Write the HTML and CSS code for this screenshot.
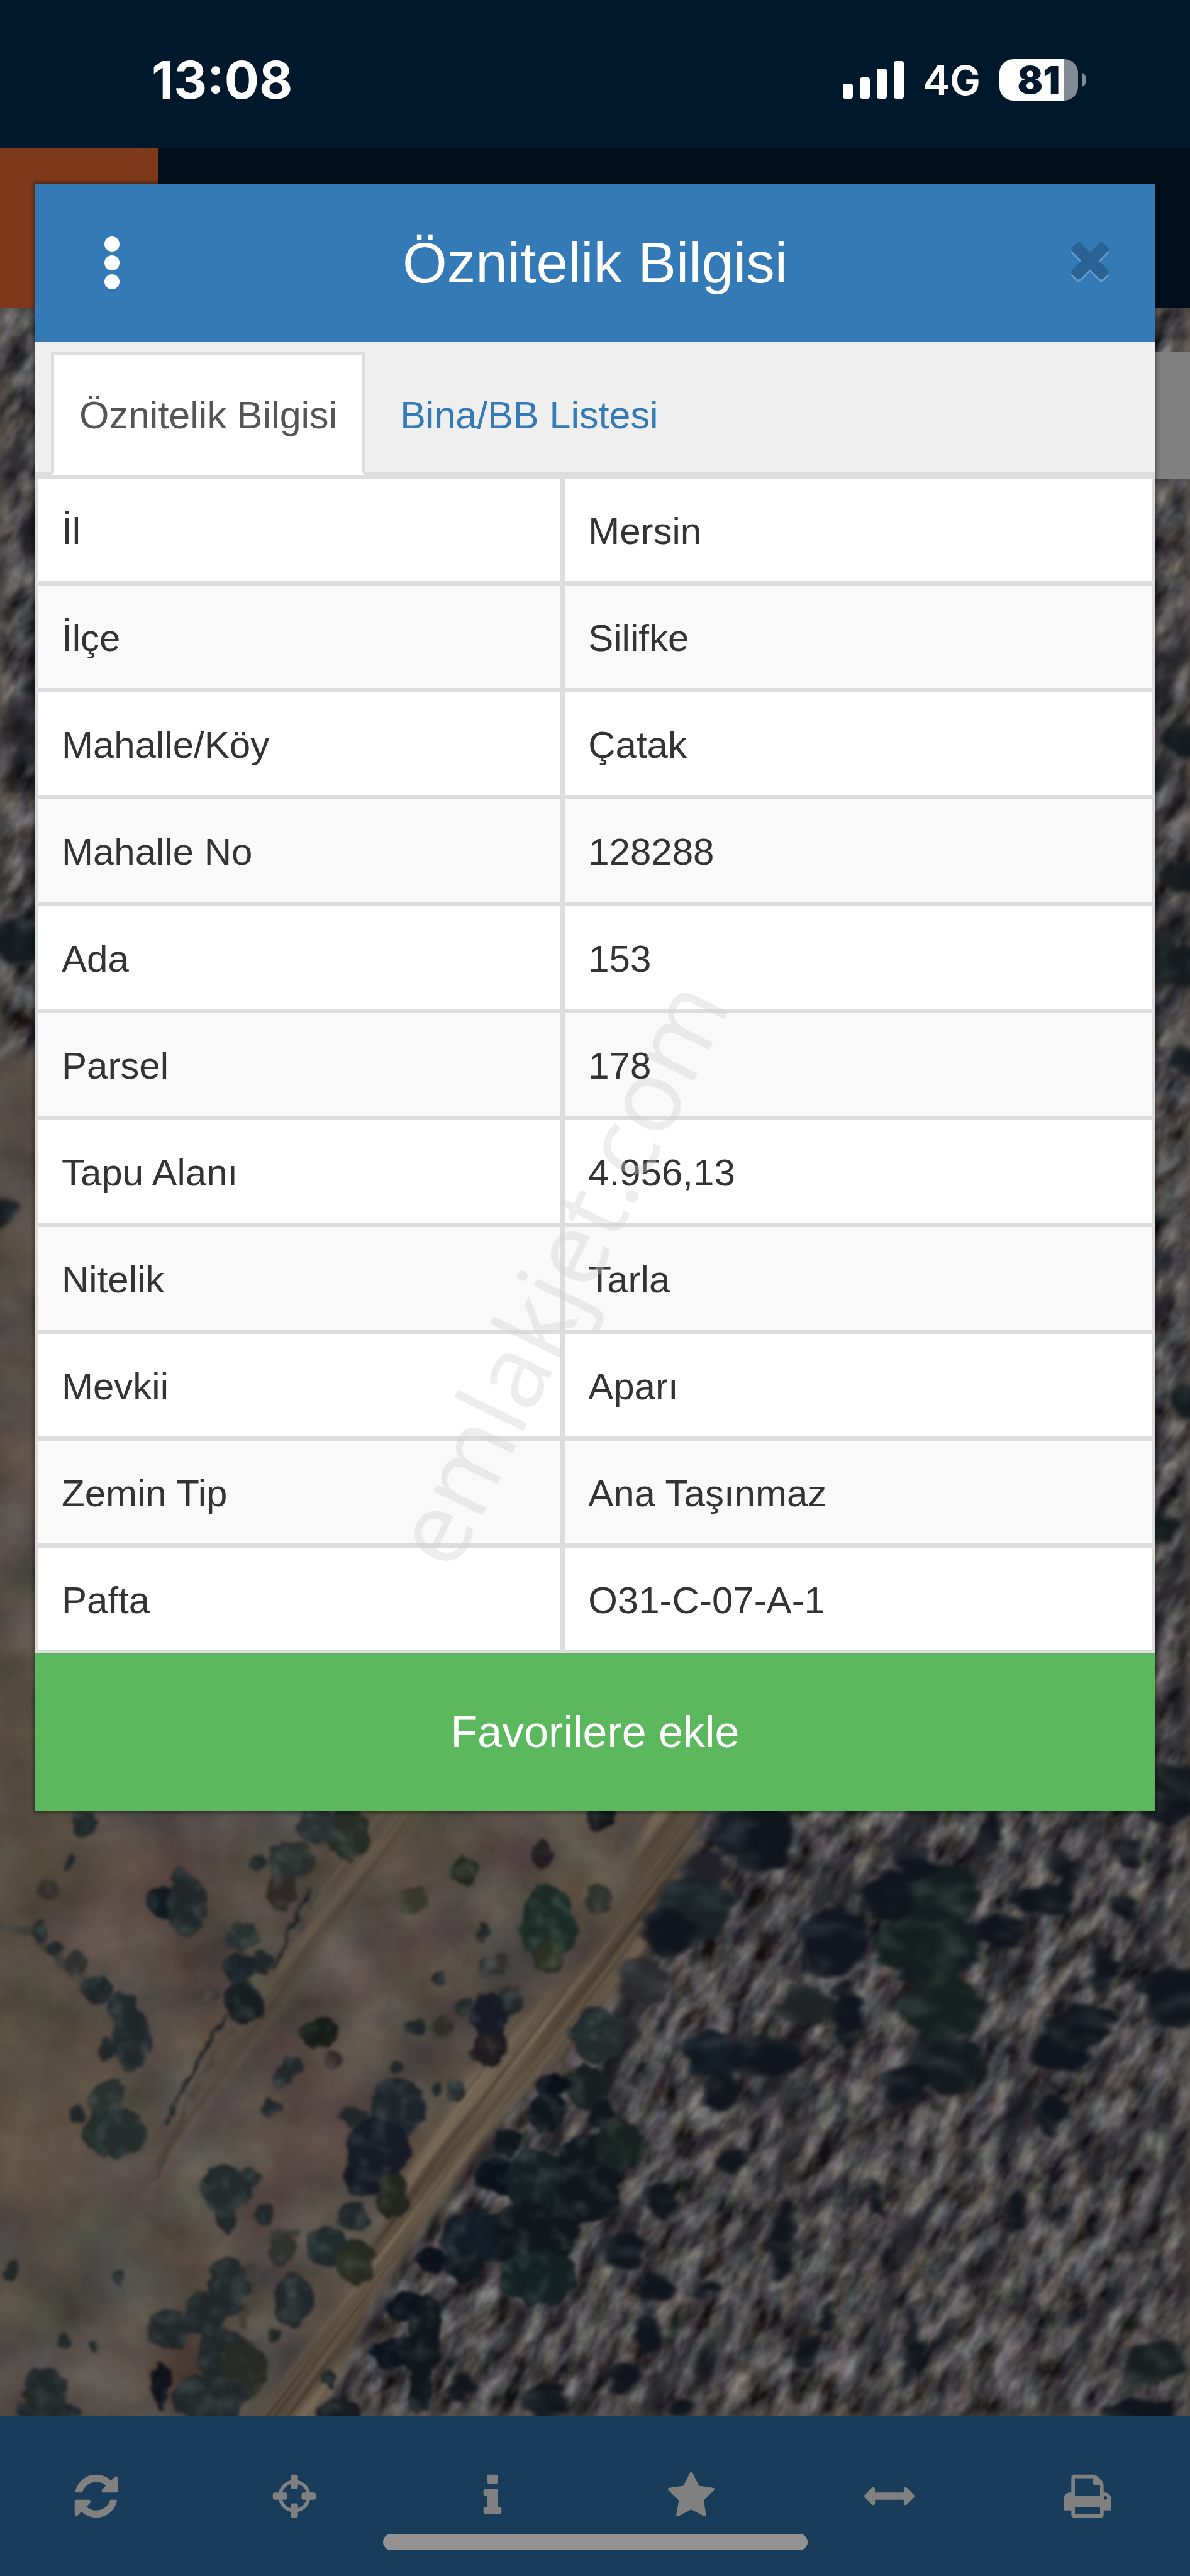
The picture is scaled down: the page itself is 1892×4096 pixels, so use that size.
FILE: index.html
```
<!DOCTYPE html>
<html lang="tr">
<head>
  <meta charset="UTF-8">
  <meta name="viewport" content="width=device-width, initial-scale=1.0">
  <title>Öznitelik Bilgisi</title>
  <link rel="stylesheet" href="styles.css">
</head>
<body>
<header class="status-bar">
  <span class="clock">13:08</span>
  <div class="status-right">
    <div class="signal"><i class="bar b1"></i><i class="bar b2"></i><i class="bar b3"></i><i class="bar b4"></i></div>
    <span class="network">4G</span>
    <div class="battery"><span class="battery-level">81</span></div>
  </div>
</header>
<div class="top-bar"><div class="logo-box"></div></div>

<main class="map">
  <svg class="map-image" viewBox="0 0 1892 3353" preserveAspectRatio="xMidYMax slice" aria-hidden="true">
    <defs>
      <filter id="soil" x="0" y="0" width="100%" height="100%" color-interpolation-filters="sRGB">
        <feTurbulence type="fractalNoise" baseFrequency=".008 .009" numOctaves="6" seed="4"/>
        <feColorMatrix values=".22 .08 0 0 .18  .22 0 0 0 .19  .17 0 .08 0 .15  0 0 0 0 1"/>
      </filter>
      <filter id="rock" x="0" y="0" width="100%" height="100%" color-interpolation-filters="sRGB">
        <feTurbulence type="fractalNoise" baseFrequency=".018 .036" numOctaves="4" seed="11"/>
        <feColorMatrix values=".85 .1 0 0 -.2  .85 0 0 0 -.155  .8 0 .12 0 -.18  0 0 0 0 1"/>
        <feGaussianBlur stdDeviation="1.5"/>
      </filter>
      <filter id="cracks" x="0" y="0" width="100%" height="100%" color-interpolation-filters="sRGB">
        <feTurbulence type="fractalNoise" baseFrequency=".006 .016" numOctaves="5" seed="23"/>
        <feColorMatrix values="0 0 0 0 .05  0 0 0 0 .06  0 0 0 0 .1  5 0 0 0 -2.85"/>
        <feGaussianBlur stdDeviation="2"/>
      </filter>
      <filter id="dirt" x="0" y="0" width="100%" height="100%" color-interpolation-filters="sRGB">
        <feTurbulence type="fractalNoise" baseFrequency=".002 .05" numOctaves="4" seed="7"/>
        <feColorMatrix values=".35 0 0 0 .2  .32 0 0 0 .165  .26 0 0 0 .135  0 0 0 0 1"/>
      </filter>
      <filter id="foliage" x="-5%" y="-5%" width="110%" height="110%" color-interpolation-filters="sRGB">
        <feTurbulence type="fractalNoise" baseFrequency=".022" numOctaves="3" seed="3" result="n"/>
        <feDisplacementMap in="SourceGraphic" in2="n" scale="36" xChannelSelector="R" yChannelSelector="G" result="d"/>
        <feColorMatrix in="n" values=".35 0 0 0 -.17  .35 0 0 0 -.165  .35 0 0 0 -.17  0 0 0 0 1" result="t"/>
        <feComposite in="t" in2="d" operator="in" result="td"/>
        <feComposite in="d" in2="td" operator="arithmetic" k2="1" k3=".9"/>
        <feGaussianBlur stdDeviation="4.5"/>
      </filter>
      <filter id="soft"><feGaussianBlur stdDeviation="40"/></filter>
      <filter id="edge"><feGaussianBlur stdDeviation="12"/></filter>
      <mask id="rockArea">
        <path filter="url(#edge)" fill="#fff" d="M0 0H1892V3353H505L600 3170 675 3050 780 2905 875 2800 985 2685 1060 2575 1125 2385 1180 1900 900 1100 60 1180 0 1200z"/>
      </mask>
      <mask id="roadArea">
        <g filter="url(#edge)" transform="translate(0 2390) scale(.62)">
          <path fill="#fff" d="M630 1600L880 1250 1000 1010 1180 720 1320 540 1540 350 1620 200 1660-20H1800L1700 290 1568 470 1400 660 1250 830 1080 1060 960 1240 790 1600z"/>
          <path fill="#999" d="M930-20H1110L830 340 700 520 480 820 400 960 380 950 440 820 620 560 790 270z"/>
        </g>
      </mask>
    </defs>

    <rect class="soil-base" width="1892" height="3353"/>
    <rect width="1892" height="3353" filter="url(#soil)"/>
    <g filter="url(#soft)" opacity=".3">
      <ellipse cx="30" cy="2350" rx="60" ry="260" fill="#5d5130"/>
      <ellipse cx="40" cy="2850" rx="140" ry="190" fill="#6d5a3c"/>
      <ellipse cx="220" cy="2520" rx="120" ry="100" fill="#5c3c3c"/>
      <ellipse cx="500" cy="2880" rx="80" ry="120" fill="#6b4a46"/>
      <ellipse cx="640" cy="2450" rx="120" ry="50" fill="#6b5535"/>
      <ellipse cx="110" cy="3150" rx="120" ry="80" fill="#40443e"/>
    </g>
    <g mask="url(#rockArea)">
      <rect x="-2200" y="-800" width="6200" height="5000" transform="rotate(-58 946 1676)" filter="url(#rock)"/>
      <rect x="-2200" y="-800" width="6200" height="5000" transform="rotate(-62 946 1676)" filter="url(#cracks)" opacity=".75"/>
      <rect width="1892" height="3353" fill="#4c4845" opacity=".22"/>
    </g>
    <g mask="url(#roadArea)">
      <rect x="-500" y="400" width="3800" height="2700" transform="rotate(-53 946 2800)" filter="url(#dirt)"/>
    </g>

    <!-- stone walls between the fields -->
    <g transform="translate(0 2390) scale(.62)" fill="none" stroke-linecap="round" filter="url(#foliage)">
      <path d="M800 190L740 320 700 410M575 530L500 660 430 800" stroke="#1f2024" stroke-width="9"/>
      <path d="M815 200L750 330M590 560L520 680 450 820 390 960" stroke="#77706a" stroke-width="12" opacity=".6"/>
      <path d="M0 290L90 320 160 390 270 470M640 1170L620 1320M700 1080H760" stroke="#746f6a" stroke-width="22" opacity=".45"/>
    </g>

    <!-- field trees -->
    <g transform="translate(0 2390) scale(.62)" fill="#22282a" filter="url(#foliage)">
      <ellipse cx="215" cy="30" rx="30" ry="28"/><ellipse cx="178" cy="135" rx="15" ry="18"/><ellipse cx="125" cy="205" rx="28" ry="25" fill="#352f2e"/>
      <ellipse cx="420" cy="235" rx="42" ry="40" fill="#11191f"/><ellipse cx="480" cy="240" rx="50" ry="80"/><ellipse cx="462" cy="170" rx="22" ry="25"/>
      <ellipse cx="890" cy="60" rx="55" ry="72" fill="#262b26"/><ellipse cx="750" cy="125" rx="60" ry="50" fill="#2a2f2e"/><ellipse cx="662" cy="135" rx="22" ry="22"/><ellipse cx="722" cy="210" rx="38" ry="42" fill="#2e2927"/><ellipse cx="810" cy="40" rx="50" ry="42" fill="#2b3033"/>
      <ellipse cx="1195" cy="155" rx="34" ry="35" fill="#222620"/><ellipse cx="1390" cy="115" rx="26" ry="32" fill="#211c20"/><ellipse cx="1062" cy="230" rx="36" ry="36" fill="#38382f"/><ellipse cx="1545" cy="15" rx="36" ry="32" fill="#111317"/>
      <ellipse cx="1405" cy="290" rx="72" ry="95" fill="#1c2b26"/><ellipse cx="1405" cy="380" rx="44" ry="40" fill="#2b2f24"/><ellipse cx="1535" cy="225" rx="34" ry="38" fill="#30342f"/>
      <ellipse cx="625" cy="325" rx="45" ry="35" fill="#283030"/><ellipse cx="615" cy="405" rx="40" ry="40" fill="#1d2429"/><ellipse cx="625" cy="490" rx="50" ry="55" fill="#181e20"/><ellipse cx="670" cy="390" rx="25" ry="28"/>
      <ellipse cx="105" cy="310" rx="20" ry="25"/><ellipse cx="137" cy="350" rx="18" ry="20"/><ellipse cx="195" cy="390" rx="30" ry="26" fill="#30312f"/><ellipse cx="250" cy="460" rx="38" ry="34"/><ellipse cx="310" cy="505" rx="34" ry="40"/><ellipse cx="340" cy="590" rx="50" ry="72"/><ellipse cx="272" cy="612" rx="22" ry="30"/>
      <ellipse cx="275" cy="745" rx="46" ry="50" fill="#2a3130"/><ellipse cx="295" cy="825" rx="85" ry="62" fill="#242d2c"/><ellipse cx="195" cy="780" rx="16" ry="22"/>
      <ellipse cx="538" cy="472" rx="24" ry="16" fill="#34302c"/><ellipse cx="820" cy="572" rx="46" ry="42" fill="#161b17"/><ellipse cx="750" cy="655" rx="28" ry="25"/><ellipse cx="725" cy="682" rx="22" ry="24"/><ellipse cx="695" cy="762" rx="30" ry="28"/><ellipse cx="855" cy="642" rx="18" ry="18" fill="#332c2b"/><ellipse cx="1012" cy="658" rx="14" ry="14"/>
      <ellipse cx="1240" cy="315" rx="18" ry="20"/><ellipse cx="1262" cy="395" rx="34" ry="28" fill="#323331"/><ellipse cx="1125" cy="432" rx="22" ry="20"/><ellipse cx="1190" cy="505" rx="22" ry="28"/><ellipse cx="1065" cy="552" rx="22" ry="22"/><ellipse cx="1135" cy="558" rx="26" ry="22" fill="#2e2d27"/>
      <ellipse cx="1305" cy="490" rx="32" ry="36"/><ellipse cx="1255" cy="530" rx="42" ry="66" fill="#171a24"/><ellipse cx="1255" cy="612" rx="46" ry="40" fill="#1f1b1f"/><ellipse cx="1175" cy="720" rx="22" ry="22"/><ellipse cx="1115" cy="712" rx="12" ry="14"/>
      <ellipse cx="1020" cy="770" rx="72" ry="82" fill="#1f252b"/><ellipse cx="905" cy="785" rx="34" ry="28"/><ellipse cx="970" cy="865" rx="84" ry="74" fill="#161b25"/><ellipse cx="945" cy="935" rx="72" ry="48" fill="#151923"/><ellipse cx="1005" cy="990" rx="44" ry="58" fill="#24271f"/>
      <ellipse cx="1530" cy="575" rx="68" ry="72" fill="#222a2b"/>
      <ellipse cx="580" cy="970" rx="62" ry="60" fill="#222a2b"/><ellipse cx="580" cy="1045" rx="28" ry="42"/><ellipse cx="675" cy="1032" rx="24" ry="26"/><ellipse cx="645" cy="945" rx="25" ry="30"/>
      <ellipse cx="910" cy="1042" rx="40" ry="36"/><ellipse cx="838" cy="1118" rx="50" ry="54" fill="#20292b"/><ellipse cx="912" cy="1155" rx="50" ry="60" fill="#272a21"/><ellipse cx="720" cy="1125" rx="34" ry="44" fill="#303230"/><ellipse cx="750" cy="1255" rx="52" ry="68"/>
      <ellipse cx="585" cy="1225" rx="54" ry="78"/><ellipse cx="435" cy="1332" rx="55" ry="50"/><ellipse cx="525" cy="1295" rx="50" ry="62"/><ellipse cx="565" cy="1400" rx="60" ry="80"/><ellipse cx="625" cy="1435" rx="62" ry="76" fill="#272a24"/><ellipse cx="535" cy="1510" rx="94" ry="64"/><ellipse cx="412" cy="1475" rx="26" ry="64" fill="#0f1219"/>
      <ellipse cx="115" cy="1490" rx="58" ry="58"/><ellipse cx="125" cy="1545" rx="82" ry="30"/><ellipse cx="28" cy="1182" rx="20" ry="20"/><ellipse cx="308" cy="1198" rx="14" ry="20"/><ellipse cx="243" cy="1372" rx="16" ry="16"/><ellipse cx="165" cy="1358" rx="18" ry="16"/>
      <ellipse cx="843" cy="1460" rx="20" ry="22"/><ellipse cx="865" cy="1545" rx="60" ry="30" fill="#171b20"/><ellipse cx="700" cy="1350" rx="12" ry="12"/>
    </g>

    <!-- dark row along the road -->
    <g transform="translate(0 2390) scale(.62)" fill="#10171c" filter="url(#foliage)">
      <ellipse cx="1420" cy="705" rx="42" ry="26" fill="#0a0f18"/><ellipse cx="1510" cy="710" rx="54" ry="56" fill="#18201f"/><ellipse cx="1400" cy="775" rx="44" ry="50"/><ellipse cx="1540" cy="780" rx="34" ry="32"/>
      <ellipse cx="1300" cy="850" rx="36" ry="34"/><ellipse cx="1290" cy="940" rx="70" ry="50" fill="#0c111b"/><ellipse cx="1380" cy="950" rx="90" ry="80" fill="#152022"/><ellipse cx="1520" cy="900" rx="90" ry="70"/><ellipse cx="1590" cy="860" rx="70" ry="60" fill="#182220"/><ellipse cx="1500" cy="1000" rx="90" ry="60"/>
      <ellipse cx="1230" cy="1090" rx="100" ry="66" fill="#131c26"/><ellipse cx="1370" cy="1090" rx="110" ry="90"/><ellipse cx="1380" cy="1200" rx="96" ry="72" fill="#142022"/><ellipse cx="1105" cy="1150" rx="40" ry="34" fill="#0c111b"/><ellipse cx="1190" cy="1170" rx="50" ry="40"/>
      <ellipse cx="1040" cy="1275" rx="52" ry="38" fill="#0c111b"/><ellipse cx="1090" cy="1310" rx="40" ry="66"/><ellipse cx="1000" cy="1390" rx="48" ry="36" fill="#0c111b"/><ellipse cx="1075" cy="1390" rx="56" ry="50"/><ellipse cx="1080" cy="1480" rx="34" ry="60"/>
    </g>

    <!-- hillside scrub -->
    <g transform="translate(0 2355) scale(1.207 .657)" fill="#10141c" filter="url(#foliage)">
      <ellipse cx="915" cy="290" rx="50" ry="80" fill="#1a2226"/><ellipse cx="880" cy="350" rx="32" ry="60"/><ellipse cx="1005" cy="120" rx="40" ry="90"/><ellipse cx="960" cy="110" rx="24" ry="60" fill="#171c27"/><ellipse cx="930" cy="190" rx="26" ry="36" fill="#23222a"/><ellipse cx="850" cy="470" rx="34" ry="60" fill="#2a2a2e"/>
      <ellipse cx="1100" cy="370" rx="44" ry="90" fill="#11151f"/><ellipse cx="1240" cy="260" rx="50" ry="80" fill="#141e20"/><ellipse cx="1220" cy="380" rx="66" ry="90" fill="#141e20"/><ellipse cx="1240" cy="530" rx="54" ry="80" fill="#172020"/><ellipse cx="1255" cy="670" rx="44" ry="70" fill="#141b1f"/><ellipse cx="1170" cy="260" rx="36" ry="60"/><ellipse cx="1205" cy="180" rx="24" ry="50"/>
      <ellipse cx="1370" cy="270" rx="42" ry="40"/><ellipse cx="1315" cy="345" rx="34" ry="44"/><ellipse cx="1425" cy="570" rx="44" ry="50"/><ellipse cx="1395" cy="640" rx="38" ry="46"/><ellipse cx="1550" cy="500" rx="42" ry="74"/><ellipse cx="1455" cy="440" rx="16" ry="60"/>
      <ellipse cx="1060" cy="525" rx="34" ry="44" fill="#202425"/><ellipse cx="1115" cy="550" rx="20" ry="80"/><ellipse cx="935" cy="645" rx="38" ry="58" fill="#111822"/><ellipse cx="1010" cy="650" rx="44" ry="54"/><ellipse cx="950" cy="745" rx="24" ry="44"/><ellipse cx="1195" cy="720" rx="26" ry="54"/><ellipse cx="1385" cy="790" rx="20" ry="54"/>
      <ellipse cx="965" cy="900" rx="18" ry="32"/><ellipse cx="870" cy="1000" rx="24" ry="44"/><ellipse cx="825" cy="1120" rx="26" ry="46"/><ellipse cx="862" cy="1210" rx="22" ry="40"/><ellipse cx="928" cy="1215" rx="15" ry="26"/><ellipse cx="1030" cy="1090" rx="14" ry="100"/><ellipse cx="1065" cy="1365" rx="20" ry="40"/><ellipse cx="852" cy="1320" rx="22" ry="50"/><ellipse cx="820" cy="1430" rx="18" ry="40"/>
      <ellipse cx="1520" cy="1390" rx="42" ry="50" fill="#171d20"/><ellipse cx="1540" cy="40" rx="36" ry="50"/><ellipse cx="1155" cy="1000" rx="10" ry="50"/><ellipse cx="1205" cy="1340" rx="10" ry="100"/><ellipse cx="1335" cy="1020" rx="9" ry="60"/><ellipse cx="1090" cy="1280" rx="11" ry="36"/><ellipse cx="1305" cy="110" rx="12" ry="60"/><ellipse cx="1400" cy="210" rx="12" ry="70"/><ellipse cx="1490" cy="160" rx="14" ry="40"/><ellipse cx="1480" cy="290" rx="20" ry="30"/>
      <ellipse cx="895" cy="1500" rx="20" ry="26"/><ellipse cx="1500" cy="1505" rx="50" ry="22"/><ellipse cx="720" cy="1480" rx="30" ry="40"/><ellipse cx="605" cy="1450" rx="16" ry="36"/>
    </g>

    <!-- scrub at the screen edges -->
    <g fill="#151a1e" filter="url(#foliage)">
      <ellipse cx="30" cy="1008" rx="44" ry="36"/><ellipse cx="0" cy="1435" rx="36" ry="24"/><ellipse cx="60" cy="608" rx="18" ry="16"/>
      <ellipse cx="1880" cy="690" rx="40" ry="26"/><ellipse cx="1886" cy="905" rx="40" ry="20"/><ellipse cx="1860" cy="1050" rx="60" ry="30"/><ellipse cx="1886" cy="1200" rx="30" ry="20"/><ellipse cx="1850" cy="1940" rx="30" ry="18"/><ellipse cx="1890" cy="1740" rx="34" ry="26"/><ellipse cx="1860" cy="2340" rx="50" ry="24"/>
    </g>
  </svg>
</main>

<nav class="bottom-bar">
  <button type="button" aria-label="Yenile"><svg viewBox="0 0 1792 1792"><path d="M1639 1056q0 5-1 7-64 268-268 434.5t-478 166.5q-146 0-282.5-55t-243.5-157l-129 129q-19 19-45 19t-45-19-19-45v-448q0-26 19-45t45-19h448q26 0 45 19t19 45-19 45l-137 137q71 66 161 102t187 36q134 0 250-65t186-179q11-17 53-117 8-23 30-23h192q13 0 22.5 9.5t9.5 22.5zm25-800v448q0 26-19 45t-45 19h-448q-26 0-45-19t-19-45 19-45l138-138q-148-137-349-137-134 0-250 65t-186 179q-11 17-53 117-8 23-30 23h-199q-13 0-22.5-9.5t-9.5-22.5v-7q65-268 270-434.5t480-166.5q146 0 284 55.5t245 156.5l130-129q19-19 45-19t45 19 19 45z"/></svg></button>
  <button type="button" aria-label="Konumum"><svg viewBox="0 0 1792 1792"><path d="M1325 1024h-109q-26 0-45-19t-19-45v-128q0-26 19-45t45-19h109q-32-108-112.5-188.5t-188.5-112.5v109q0 26-19 45t-45 19h-128q-26 0-45-19t-19-45v-109q-108 32-188.5 112.5t-112.5 188.5h109q26 0 45 19t19 45v128q0 26-19 45t-45 19h-109q32 108 112.5 188.5t188.5 112.5v-109q0-26 19-45t45-19h128q26 0 45 19t19 45v109q108-32 188.5-112.5t112.5-188.5zm339-192v128q0 26-19 45t-45 19h-143q-37 161-154.5 278.5t-278.5 154.5v143q0 26-19 45t-45 19h-128q-26 0-45-19t-19-45v-143q-161-37-278.5-154.5t-154.5-278.5h-143q-26 0-45-19t-19-45v-128q0-26 19-45t45-19h143q37-161 154.5-278.5t278.5-154.5v-143q0-26 19-45t45-19h128q26 0 45 19t19 45v143q161 37 278.5 154.5t154.5 278.5h143q26 0 45 19t19 45z"/></svg></button>
  <button type="button" aria-label="Bilgi"><svg viewBox="0 0 1792 1792"><path d="M1216 1344v128q0 26-19 45t-45 19h-512q-26 0-45-19t-19-45v-128q0-26 19-45t45-19h64v-384h-64q-26 0-45-19t-19-45v-128q0-26 19-45t45-19h384q26 0 45 19t19 45v576h64q26 0 45 19t19 45zm-128-1152v192q0 26-19 45t-45 19h-256q-26 0-45-19t-19-45v-192q0-26 19-45t45-19h256q26 0 45 19t19 45z"/></svg></button>
  <button type="button" aria-label="Favoriler"><svg viewBox="0 0 1792 1792"><path d="M1728 647q0 22-26 48l-363 354 86 500q1 7 1 20 0 21-10.5 35.5t-30.5 14.5q-19 0-40-12l-449-236-449 236q-22 12-40 12-21 0-31.5-14.5t-10.5-35.5q0-6 2-20l86-500-364-354q-25-27-25-48 0-37 56-46l502-73 225-455q19-41 49-41t49 41l225 455 502 73q56 9 56 46z"/></svg></button>
  <button type="button" aria-label="Ölçüm"><svg viewBox="0 0 1792 1792"><path d="M1792 896q0 26-19 45l-256 256q-19 19-45 19t-45-19-19-45v-128h-1024v128q0 26-19 45t-45 19-45-19l-256-256q-19-19-19-45t19-45l256-256q19-19 45-19t45 19 19 45v128h1024v-128q0-26 19-45t45-19 45 19l256 256q19 19 19 45z"/></svg></button>
  <button type="button" aria-label="Yazdır"><svg viewBox="0 0 1792 1792"><path d="M448 1536h896v-256h-896v256zm0-640h896v-384h-160q-40 0-68-28t-28-68v-160h-640v640zm1152 64q0-26-19-45t-45-19-45 19-19 45 19 45 45 19 45-19 19-45zm128 0v416q0 13-9.5 22.5t-22.5 9.5h-224v160q0 40-28 68t-68 28h-960q-40 0-68-28t-28-68v-160h-224q-13 0-22.5-9.5t-9.5-22.5v-416q0-79 56.5-135.5t135.5-56.5h64v-544q0-40 28-68t68-28h672q40 0 88 20t76 48l152 152q28 28 48 76t20 88v256h64q79 0 135.5 56.5t56.5 135.5z"/></svg></button>
  <span class="home-indicator"></span>
</nav>

<div class="map-panel"></div>

<section class="modal" role="dialog" aria-labelledby="modalTitle">
  <div class="modal-header">
    <button type="button" class="menu-button" aria-label="Menü"><svg viewBox="0 0 90 90"><circle cx="45" cy="15" r="12"/><circle cx="45" cy="45" r="12"/><circle cx="45" cy="75" r="12"/></svg></button>
    <h1 id="modalTitle">Öznitelik Bilgisi</h1>
    <button type="button" class="close-button" aria-label="Kapat"><svg viewBox="0 0 1792 1792"><path d="M1490 1190q0 40-28 68l-136 136q-28 28-68 28t-68-28l-294-294-294 294q-28 28-68 28t-68-28l-136-136q-28-28-28-68t28-68l294-294-294-294q-28-28-28-68t28-68l136-136q28-28 68-28t68 28l294 294 294-294q28-28 68-28t68 28l136 136q28 28 28 68t-28 68l-294 294 294 294q28 28 28 68z"/></svg></button>
  </div>
  <div class="tabs" role="tablist">
    <button type="button" role="tab" class="tab active" aria-selected="true">Öznitelik Bilgisi</button>
    <button type="button" role="tab" class="tab" aria-selected="false">Bina/BB Listesi</button>
  </div>
  <table class="attributes">
    <tbody>
    <tr><th scope="row">İl</th><td>Mersin</td></tr>
    <tr><th scope="row">İlçe</th><td>Silifke</td></tr>
    <tr><th scope="row">Mahalle/Köy</th><td>Çatak</td></tr>
    <tr><th scope="row">Mahalle No</th><td>128288</td></tr>
    <tr><th scope="row">Ada</th><td>153</td></tr>
    <tr><th scope="row">Parsel</th><td>178</td></tr>
    <tr><th scope="row">Tapu Alanı</th><td>4.956,13</td></tr>
    <tr><th scope="row">Nitelik</th><td>Tarla</td></tr>
    <tr><th scope="row">Mevkii</th><td>Aparı</td></tr>
    <tr><th scope="row">Zemin Tip</th><td>Ana Taşınmaz</td></tr>
    <tr><th scope="row">Pafta</th><td>O31-C-07-A-1</td></tr>
    </tbody>
  </table>
  <button type="button" class="favorite-button">Favorilere ekle</button>
</section>

<div class="watermark"><span>emlakjet.com</span></div>
</body>
</html>
```
FILE: styles.css
```
* {
  box-sizing: border-box;
}

body {
  position: relative;
  display: flex;
  flex-direction: column;
  min-height: 100vh;
  margin: 0;
  overflow-x: hidden;
  background-color: #00182b;
  color: #333;
  font-family: "Liberation Sans", Arial, sans-serif;
}

button {
  margin: 0;
  padding: 0;
  border: 0;
  background: none;
  font-family: inherit;
  cursor: pointer;
}

/* Status bar */
.status-bar {
  display: flex;
  align-items: center;
  justify-content: space-between;
  height: 236px;
  padding: 18px 165px 0 241px;
  color: #fff;
  font-family: Inter, sans-serif;
}

.clock {
  font-size: 82px;
  font-weight: 700;
}

.status-right {
  display: flex;
  align-items: center;
  gap: 30px;
}

.signal {
  display: flex;
  align-items: flex-end;
  gap: 11px;
}

.bar {
  width: 16px;
  border-radius: 4px;
  background-color: #fff;
}

.b1 { height: 24px; }
.b2 { height: 34px; }
.b3 { height: 48px; }
.b4 { height: 60px; }

.network {
  font-size: 65px;
  font-weight: 600;
}

.battery {
  position: relative;
  width: 125px;
  height: 66px;
  margin-right: 13px;
  border-radius: 22px;
  background: linear-gradient(90deg, #fff 82%, #808b94 82%);
  color: #00182b;
  text-align: center;
}

.battery::after {
  content: "";
  position: absolute;
  top: 22px;
  right: -13px;
  width: 7px;
  height: 22px;
  border-radius: 0 7px 7px 0 / 0 11px 11px 0;
  background-color: #808b94;
}

.battery-level {
  font-size: 60px;
  font-weight: 900;
  line-height: 66px;
}

/* Application bar */
.top-bar {
  height: 253px;
  background-color: #000f1b;
}

.logo-box {
  width: 252px;
  height: 100%;
  background-color: #7e391a;
}

/* Map */
.map {
  flex: 1;
  display: flex;
  min-height: 0;
  overflow: hidden;
  background-color: #4c4847;
}

.map-image {
  display: block;
  width: 100%;
}

.soil-base {
  fill: #544b45;
}

.map-panel {
  position: absolute;
  top: 560px;
  right: 0;
  width: 252px;
  height: 202px;
  background-color: #808080;
}

/* Bottom toolbar */
.bottom-bar {
  position: relative;
  display: grid;
  grid-template-columns: repeat(6, 1fr);
  height: 254px;
  background-color: #1a3c5b;
}

.bottom-bar button {
  display: flex;
  align-items: center;
  justify-content: center;
  padding-right: 10px;
}

.bottom-bar svg {
  width: 80px;
  height: 80px;
  fill: #808080;
}

.home-indicator {
  position: absolute;
  bottom: 41px;
  left: 50%;
  width: 675px;
  height: 26px;
  margin-left: -337px;
  border-radius: 13px;
  background-color: #929292;
}

/* Dialog */
.modal {
  position: absolute;
  top: 292px;
  left: 56px;
  right: 56px;
  background-color: #fff;
  box-shadow: 0 0 5px 3px rgba(0, 0, 0, 0.35);
}

.modal-header {
  display: grid;
  grid-template-columns: 1fr auto 1fr;
  align-items: center;
  height: 252px;
  padding: 0 58px;
  background-color: #337ab7;
  color: #fff;
}

.modal-header h1 {
  margin: 0;
  font-size: 91px;
  font-weight: 400;
  line-height: 100px;
}

.modal-header svg {
  display: block;
  width: 90px;
  height: 90px;
}

.menu-button {
  display: flex;
  justify-content: center;
  width: 128px;
  fill: #fff;
}

.close-button {
  justify-self: end;
  fill: #2a6293;
}

.close-button svg {
  filter: drop-shadow(0 4px 0 rgba(255, 255, 255, 0.25));
}

.tabs {
  display: flex;
  gap: 10px;
  padding: 16px 25px 0;
  border-bottom: 5px solid #ddd;
  background-color: #efefef;
}

.tab {
  height: 196px;
  margin-bottom: -5px;
  padding: 4px 40px 0;
  border: 5px solid transparent;
  color: #337ab7;
  font-size: 61px;
}

.tab.active {
  border-color: #ddd #ddd #fff;
  background-color: #fff;
  color: #555;
}

.attributes {
  width: 100%;
  border: 5px solid #ddd;
  border-bottom: 0;
  border-spacing: 0;
  font-size: 60px;
  line-height: 70px;
}

.attributes th,
.attributes td {
  padding: 49px 38px 44px 37px;
  border-bottom: 7px solid #ddd;
  font-weight: 400;
  text-align: left;
}

.attributes th {
  width: 47.3%;
  border-right: 7px solid #ddd;
}

.attributes tr:nth-child(even) {
  background-color: #f9f9f9;
}

.attributes tr:last-child th,
.attributes tr:last-child td {
  border-bottom-width: 4px;
}

.favorite-button {
  display: block;
  width: 100%;
  height: 252px;
  background-color: #5cb85c;
  color: #fff;
  font-size: 70px;
}

.watermark {
  position: absolute;
  top: 0;
  right: 120px;
  bottom: 52px;
  left: 0;
  display: flex;
  align-items: center;
  justify-content: center;
  color: rgba(208, 208, 208, 0.38);
  font-family: "Open Sans", sans-serif;
  font-size: 161px;
  pointer-events: none;
}

.watermark span {
  transform: rotate(-64deg);
}
```
